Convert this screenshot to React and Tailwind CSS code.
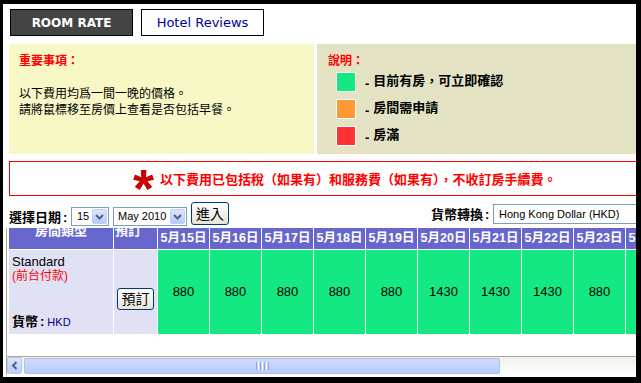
import React from 'react';

const dates = ['5月15日', '5月16日', '5月17日', '5月18日', '5月19日', '5月20日', '5月21日', '5月22日', '5月23日', '5月24日'];
const prices = [880, 880, 880, 880, 880, 1430, 1430, 1430, 880, 880];

const legend = [
  { color: 'bg-[#14e883]', label: '目前有房，可立即確認' },
  { color: 'bg-[#ff9933]', label: '房間需申請' },
  { color: 'bg-[#ff3333]', label: '房滿' },
];

// XP style dropdown arrow
const DropArrow = () => (
  <div className="w-[15px] h-[15px] shrink-0 rounded-[2px] border border-[#b9cdf6] bg-gradient-to-b from-[#dce6fd] to-[#b7cbf9] flex items-center justify-center">
    <svg width="9" height="6" viewBox="0 0 9 6">
      <polyline points="1,1 4.5,4.5 8,1" fill="none" stroke="#4d6185" strokeWidth="2" />
    </svg>
  </div>
);

const FakeSelect = ({ value, className, arrow = true }) => (
  <div className={`flex items-center border border-[#7f9db9] bg-white pr-[1px] ${className}`}>
    <span className="flex-1 text-[11px] leading-none text-black whitespace-nowrap overflow-hidden">{value}</span>
    {arrow && <DropArrow />}
  </div>
);

const XpButton = ({ children, className }) => (
  <div className={`flex items-center justify-center border border-[#003c74] rounded-[3px] bg-gradient-to-b from-white to-[#e6e3d6] text-[14px] leading-none text-black ${className}`}>
    {children}
  </div>
);

const App = () => {
  return (
    <div className="w-[641px] h-[383px] bg-black pt-[4px] pl-[3px] pr-[5px] pb-[6px] font-['Liberation_Sans','Noto_Sans_CJK_TC',sans-serif]">
      <div className="h-full bg-white overflow-hidden">
        {/* Tabs */}
        <div className="flex gap-[8px] pt-[5px] pl-[7px]">
          <div className="w-[123px] h-[27px] border border-black bg-[#444444] flex items-center justify-center font-['DejaVu_Sans',sans-serif] font-bold text-[12px] text-white">
            ROOM RATE
          </div>
          <div className="w-[123px] h-[27px] border border-black bg-white flex items-center justify-center font-['DejaVu_Sans',sans-serif] text-[13px] text-[#000099]">
            Hotel Reviews
          </div>
        </div>

        {/* Notes + legend */}
        <div className="flex gap-[3px] mt-[8px] ml-[6px] h-[110px]">
          <div className="w-[305px] shrink-0 bg-[#f8f8c6] pl-[10px] pt-[9px]">
            <div className="text-[12px] leading-[16px] font-bold text-[#ff0000]">重要事項：</div>
            <div className="mt-[17px] text-[12px] leading-[16px] text-black">
              <p>以下費用均爲一間一晚的價格。</p>
              <p>請將鼠標移至房價上查看是否包括早餐。</p>
            </div>
          </div>
          <div className="flex-1 bg-[#e3e3c4] pl-[11px] pt-[9px]">
            <div className="text-[12px] leading-[16px] font-bold text-[#ff0000]">說明：</div>
            <div className="flex flex-col gap-[7px] mt-[3px] ml-[8px]">
              {legend.map((item) => (
                <div key={item.label} className="flex items-center">
                  <div className={`w-[20px] h-[20px] border border-white ${item.color}`} />
                  <span className="ml-[9px] text-[13px] leading-[16px] font-bold text-black">
                    <span className="align-[-3px] mr-[4px]">-</span>
                    {item.label}
                  </span>
                </div>
              ))}
            </div>
          </div>
        </div>

        {/* Tax notice */}
        <div className="mt-[7px] ml-[6px] w-[676px] h-[35px] border border-[#ff0000] flex items-start pl-[123px]">
          <span className="mt-[-1px] h-[33px] leading-[54px] text-[54px] font-bold text-[#cc0000] font-['Liberation_Sans',sans-serif]">*</span>
          <span className="ml-[6px] mt-[10px] text-[13px] leading-[16px] font-bold text-[#ff0000] whitespace-nowrap">
            以下費用已包括稅（如果有）和服務費（如果有），不收訂房手續費。
          </span>
        </div>

        {/* Date + currency row */}
        <div className="flex items-start h-[32px] ml-[6px] w-[676px]">
          <span className="w-[62px] mt-[14px] text-[13px] leading-[16px] font-bold text-black whitespace-nowrap">選擇日期<span className="ml-[2px]">:</span></span>
          <FakeSelect value="15" className="w-[38px] h-[19px] mt-[11px] pl-[5px]" />
          <FakeSelect value="May 2010" className="w-[74px] h-[19px] mt-[11px] ml-[4px] pl-[4px]" />
          <XpButton className="w-[38px] h-[23px] mt-[6px] ml-[4px]">進入</XpButton>
          <span className="ml-[202px] w-[62px] mt-[11px] text-[13px] leading-[16px] font-bold text-black whitespace-nowrap">貨幣轉換<span className="ml-[2px]">:</span></span>
          <FakeSelect value="Hong Kong Dollar (HKD)" arrow={false} className="w-[192px] h-[20px] mt-[8px] pl-[5px]" />
        </div>

        {/* Rate table in scroll box */}
        <div className="ml-[3px] border-l border-[#aca899] h-[146px] flex flex-col">
          <div className="h-[128px] overflow-hidden bg-white pl-[2px]">
            <div className="flex gap-[1px] h-[21px] w-max">
              <div className="w-[104px] bg-[#6666cc] flex justify-center">
                <span className="-mt-[5px] text-[13px] leading-[16px] font-bold text-white">房間類型</span>
              </div>
              <div className="w-[43px] bg-[#6666cc] flex justify-start pl-[1px]">
                <span className="-mt-[5px] text-[13px] leading-[16px] font-bold text-white">預訂</span>
              </div>
              {dates.map((d) => (
                <div key={d} className="w-[51px] bg-[#6666cc] flex items-center justify-center text-[12.5px] font-bold text-white whitespace-nowrap">
                  {d}
                </div>
              ))}
            </div>
            <div className="flex gap-[1px] h-[84px] mt-[1px] w-max">
              <div className="w-[104px] bg-[#e1e1f6] flex flex-col pl-[3px] pt-[4px] pb-[4px]">
                <span className="text-[13px] leading-[15px] text-black">Standard</span>
                <span className="text-[12px] leading-[15px] text-[#ff0000]">(前台付款)</span>
                <span className="mt-auto text-[13px] leading-[16px] font-bold text-black whitespace-nowrap">
                  貨幣<span className="ml-[2px]">:</span><span className="ml-[3px] text-[11px] font-normal text-[#000080]">HKD</span>
                </span>
              </div>
              <div className="w-[43px] bg-[#e1e1f6] flex justify-center pt-[38px]">
                <XpButton className="w-[37px] h-[22px]">預訂</XpButton>
              </div>
              {prices.map((p, i) => (
                <div key={i} className="w-[51px] bg-[#14e883] flex items-center justify-center text-[13px] text-black">
                  {p}
                </div>
              ))}
            </div>
          </div>

          {/* Horizontal scrollbar */}
          <div className="border-t border-[#aca899] h-[18px] flex bg-gradient-to-b from-[#f3f1ea] to-[#fdfdfb] pb-[1px]">
            <div className="w-[15px] h-[17px] rounded-[2px] border border-[#b5c9f4] bg-gradient-to-b from-[#dbe5fe] to-[#bacdf9] flex items-center justify-center">
              <svg width="7" height="9" viewBox="0 0 7 9">
                <polyline points="5.5,1 2,4.5 5.5,8" fill="none" stroke="#4d6185" strokeWidth="2" />
              </svg>
            </div>
            <div className="ml-[2px] w-[476px] h-[16px] mt-[1px] rounded-[2px] border border-[#a9c0f3] bg-gradient-to-b from-[#d0dcfc] to-[#b9ccf9] flex items-center justify-center gap-[1px]">
              <div className="w-[1px] h-[8px] bg-[#8da7ea]" />
              <div className="w-[1px] h-[8px] bg-white" />
              <div className="w-[1px] h-[8px] bg-[#8da7ea]" />
              <div className="w-[1px] h-[8px] bg-white" />
              <div className="w-[1px] h-[8px] bg-[#8da7ea]" />
              <div className="w-[1px] h-[8px] bg-white" />
              <div className="w-[1px] h-[8px] bg-[#8da7ea]" />
            </div>
          </div>
        </div>
      </div>
    </div>
  );
};

export default App;
